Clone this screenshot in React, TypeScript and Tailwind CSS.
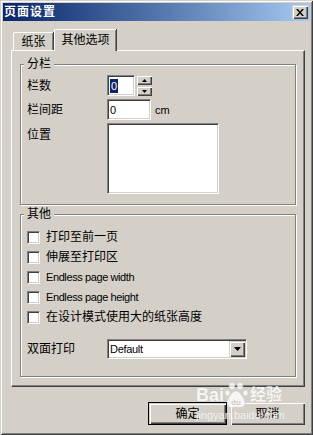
import React from "react";

const sunken =
  "bg-white border border-t-[#808080] border-l-[#808080] border-r-white border-b-white shadow-[inset_1px_1px_0_#404040,inset_-1px_-1px_0_#d4d0c8]";
const raised =
  "bg-[#d4d0c8] shadow-[inset_1px_1px_0_#d4d0c8,inset_2px_2px_0_#ffffff,inset_-1px_-1px_0_#404040,inset_-2px_-2px_0_#808080]";

function Check({ label, latin }: { label: string; latin?: boolean }) {
  return (
    <div className="flex items-center h-[13px]">
      <div className={`w-[13px] h-[13px] ${sunken}`} />
      <span
        className={
          latin
            ? "ml-[6px] text-[11px] tracking-[-0.4px] leading-[13px]"
            : "ml-[6px] text-[12px] leading-[13px]"
        }
      >
        {label}
      </span>
    </div>
  );
}

function Arrow({ up }: { up?: boolean }) {
  return (
    <svg width="5" height="3" viewBox="0 0 5 3">
      {up ? <path d="M2.5 0 L5 3 L0 3 Z" fill="#000" /> : <path d="M0 0 L5 0 L2.5 3 Z" fill="#000" />}
    </svg>
  );
}

export default function App() {
  return (
    <div className="relative w-[313px] h-[435px] bg-[#d4d0c8] p-[3px] flex flex-col text-black text-[12px] leading-[14px] font-['Liberation_Sans','Noto_Sans_CJK_SC',sans-serif] shadow-[inset_1px_1px_0_#d4d0c8,inset_-1px_-1px_0_#404040,inset_2px_2px_0_#ffffff,inset_-2px_-2px_0_#808080]">
      {/* Title bar */}
      <div className="h-[18px] flex items-center justify-between bg-linear-to-r from-[#0a246a] to-[#a6caf0] pl-[1px] pr-[2px]">
        <span className="text-white font-bold text-[12px] tracking-[1px] leading-[14px]">页面设置</span>
        <div className={`w-[16px] h-[14px] flex items-center justify-center ${raised}`}>
          <svg width="8" height="7" viewBox="0 0 8 7">
            <path d="M0 0h2l2 2.5L6 0h2L5 3.5 8 7H6L4 4.5 2 7H0l3-3.5z" fill="#000" />
          </svg>
        </div>
      </div>

      {/* Tabs */}
      <div className="mt-[8px] pl-[8px] pr-[5px] flex flex-col">
        <div className="flex items-end h-[21px]">
          <div className="ml-[2px] w-[40px] h-[18px] flex items-center justify-center border-t border-l border-white rounded-tl-[2px] shadow-[inset_-1px_0_0_#808080,1px_0_0_#404040]">
            <span className="pt-[1px]">纸张</span>
          </div>
          <div className="relative z-10 -mb-px ml-[1px] w-[62px] h-[22px] flex justify-center bg-[#d4d0c8] border-t border-l border-white rounded-tl-[2px] shadow-[inset_-1px_0_0_#808080,1px_0_0_#404040]">
            <span className="pt-[3px]">其他选项</span>
          </div>
        </div>

        {/* Panel */}
        <div className="h-[337px] border border-t-white border-l-white border-r-[#404040] border-b-[#404040] shadow-[inset_-1px_-1px_0_#808080] px-[8px] flex flex-col">
          {/* Group 1 */}
          <fieldset className="mt-[6px] min-w-0 border border-[#808080] shadow-[inset_1px_1px_0_#ffffff,1px_1px_0_#ffffff] pl-[6px] pt-[4px] pb-[10px]">
            <legend className="-ml-[3px] px-[3px] bg-[#d4d0c8] leading-[14px]">分栏</legend>
            <div className="grid grid-cols-[80px_auto] gap-y-[3px]">
              <div className="flex items-center">栏数</div>
              <div className="flex items-center h-[21px]">
                <div className={`w-[28px] h-[21px] flex items-center pl-[2px] ${sunken}`}>
                  <span className="bg-[#0a246a] text-white text-[11px] leading-[14px] px-[1px]">0</span>
                </div>
                <div className="ml-[1px] flex flex-col gap-[1px]">
                  <div className={`w-[16px] h-[10px] flex items-center justify-center ${raised}`}>
                    <Arrow up />
                  </div>
                  <div className={`w-[16px] h-[10px] flex items-center justify-center ${raised}`}>
                    <Arrow />
                  </div>
                </div>
              </div>

              <div className="flex items-center">栏间距</div>
              <div className="flex items-center h-[21px]">
                <div className={`w-[44px] h-[21px] flex items-center pl-[2px] text-[11px] ${sunken}`}>0</div>
                <span className="ml-[4px] text-[11px]">cm</span>
              </div>

              <div className="pt-[5px]">位置</div>
              <div className={`w-[112px] h-[71px] ${sunken}`} />
            </div>
          </fieldset>

          {/* Group 2 */}
          <fieldset className="mt-[2px] min-w-0 border border-[#808080] shadow-[inset_1px_1px_0_#ffffff,1px_1px_0_#ffffff] pl-[6px] pt-[10px] pb-[17px]">
            <legend className="-ml-[3px] px-[3px] bg-[#d4d0c8] leading-[14px]">其他</legend>
            <div className="flex flex-col gap-[7px]">
              <Check label="打印至前一页" />
              <Check label="伸展至打印区" />
              <Check label="Endless page width" latin />
              <Check label="Endless page height" latin />
              <Check label="在设计模式使用大的纸张高度" />
            </div>
            <div className="mt-[15px] grid grid-cols-[80px_auto] items-center">
              <span>双面打印</span>
              <div className={`w-[140px] h-[20px] flex items-center justify-between pl-[2px] pr-[1px] ${sunken}`}>
                <span className="text-[11px] tracking-[-0.3px]">Default</span>
                <div className={`w-[16px] h-[16px] flex items-center justify-center ${raised}`}>
                  <svg width="7" height="4" viewBox="0 0 7 4">
                    <path d="M0 0h7L3.5 4z" fill="#000" />
                  </svg>
                </div>
              </div>
            </div>
          </fieldset>
        </div>

        {/* Buttons */}
        <div className="mt-[15px] flex justify-end gap-[3px]">
          <div className="w-[79px] h-[23px] border border-black">
            <div className={`w-full h-full flex items-center justify-center ${raised}`}>确定</div>
          </div>
          <div className={`w-[75px] h-[23px] flex items-center justify-center ${raised}`}>取消</div>
        </div>
      </div>

      {/* Watermark overlay */}
      <div className="absolute left-[196px] top-[381px] flex flex-col items-start pointer-events-none opacity-80">
        <div className="flex items-center h-[28px]">
          <span className="text-white font-bold text-[18px] leading-[18px] [text-shadow:0_0_1px_#bbb]">Bai</span>
          <svg width="24" height="27" viewBox="0 0 24 27" className="mx-[1px]">
            <g fill="#ffffff" stroke="#c8c8c8" strokeWidth="0.5">
              <ellipse cx="7" cy="4" rx="3" ry="3.5" />
              <ellipse cx="15" cy="4" rx="3" ry="3.5" />
              <ellipse cx="2.5" cy="11" rx="2.5" ry="3" />
              <ellipse cx="20.5" cy="11" rx="2.5" ry="3" />
              <path d="M11 9c4 0 9 8 9 12 0 5-6 5-9 4-3 1-9 1-9-4 0-4 5-12 9-12z" />
            </g>
            <text x="6" y="23" fontSize="8" fontWeight="bold" fill="#c8c8c8" fontFamily="Liberation Sans, sans-serif">du</text>
          </svg>
          <span className="text-white font-bold text-[16px] leading-[18px] [text-shadow:0_0_1px_#bbb]">经验</span>
        </div>
        <span className="text-white text-[11px] leading-[12px] [text-shadow:0_0_1px_#bbb]">jingyan.baidu.com</span>
      </div>
    </div>
  );
}
